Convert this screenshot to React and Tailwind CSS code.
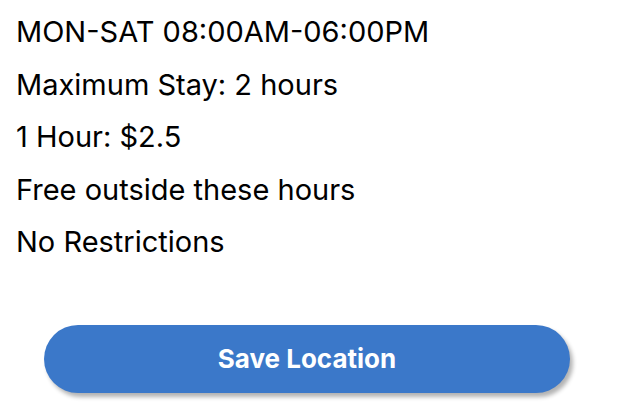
import React from "react";

const lines = [
  "MON-SAT 08:00AM-06:00PM",
  "Maximum Stay: 2 hours",
  "1 Hour: $2.5",
  "Free outside these hours",
  "No Restrictions",
];

export default function App() {
  return (
    <div className="min-h-[418px] w-full bg-white font-['Inter',sans-serif] text-black">
      <div className="px-4 pt-[6px]">
        {lines.map((line) => (
          <p key={line} className="text-[29px] leading-[52.5px]">
            {line}
          </p>
        ))}
      </div>
      <div className="mt-[56px] pl-[44px] pr-[48px]">
        <button
          type="button"
          className="h-[68px] w-full rounded-full bg-[#3b78c9] text-[26px] font-bold text-white shadow-[3px_4px_4px_rgba(0,0,0,0.3)]"
        >
          Save Location
        </button>
      </div>
    </div>
  );
}
